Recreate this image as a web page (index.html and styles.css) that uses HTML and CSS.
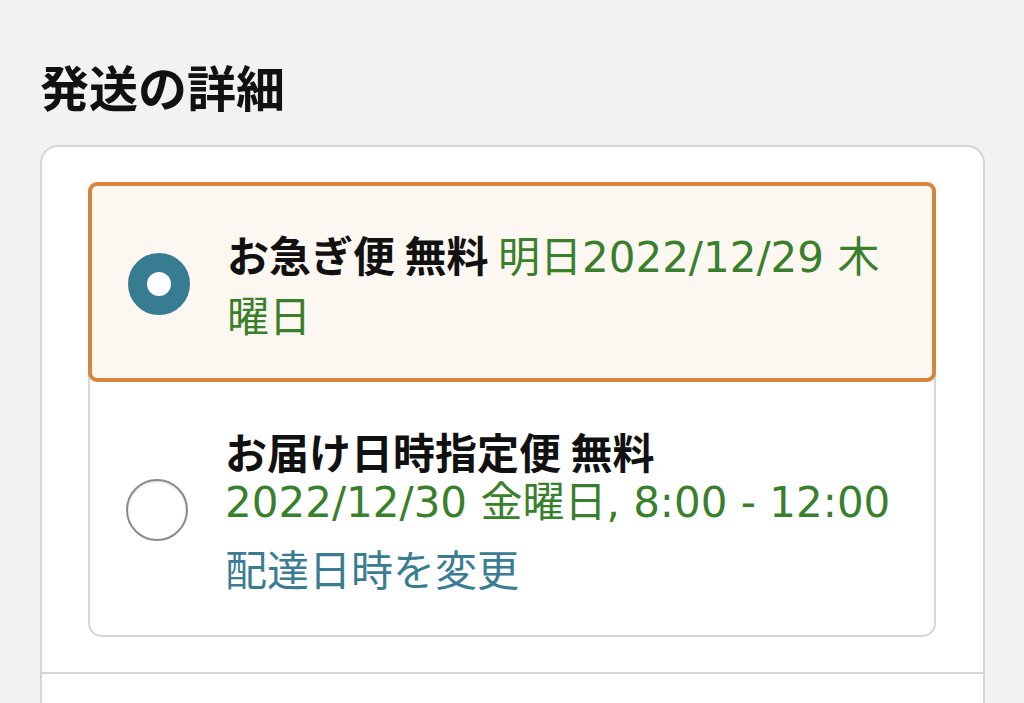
FILE: index.html
```html
<!DOCTYPE html>
<html lang="ja">
<head>
  <meta charset="UTF-8">
  <meta name="viewport" content="width=device-width, initial-scale=1.0">
  <title>発送の詳細</title>
  <link rel="stylesheet" href="styles.css">
</head>
<body>
  <div class="page">
    <h1 class="title">発送の詳細</h1>

    <div class="card">
      <div class="card-section">
        <div class="options">
          <div class="option selected">
            <span class="radio checked"></span>
            <p class="option-text">
              <span class="option-name">お急ぎ便 無料</span>
              <span class="date">明日2022/12/29 木曜日</span>
            </p>
          </div>
          <div class="option">
            <span class="radio"></span>
            <div class="option-text">
              <p class="option-name line">お届け日時指定便 無料</p>
              <p class="date line nowrap">2022/12/30 金曜日, 8:00 - 12:00</p>
              <a class="change-link" href="#">配達日時を変更</a>
            </div>
          </div>
        </div>
      </div>
      <div class="card-section next"></div>
    </div>
  </div>
</body>
</html>
```

FILE: styles.css
```css
body {
  margin: 0;
  background-color: #f2f2f2;
  font-family: "Noto Sans CJK JP", "Noto Sans", sans-serif;
  color: #111;
}
.page {
  padding: 0 39px 0 40px;
}
.title {
  margin: 51px 0 24px;
  font-size: 49px;
  font-weight: 700;
  line-height: 70px;
}
.card {
  background-color: #fff;
  border: 2px solid #d6d6d6;
  border-radius: 18px 18px 0 0;
  border-bottom: none;
}
.card-section {
  padding: 35px 47px 35px 46px;
}
.card-section.next {
  border-top: 2px solid #d6d6d6;
  height: 120px;
}
.options {
  border: 2px solid #d6d6d6;
  border-radius: 14px;
}
.option {
  display: flex;
  align-items: center;
  gap: 37px;
  padding: 43px 34px 41px 36px;
}
.option.selected {
  margin: -2px -2px 0;
  padding: 38px 34px 34px 36px;
  border: 4px solid #d9843b;
  border-radius: 9px;
  background-color: #fcf7f0;
}
.radio {
  flex: none;
  width: 62px;
  height: 62px;
  box-sizing: border-box;
  border-radius: 50%;
  border: 2px solid #8a8a8a;
  background-color: #fff;
  box-shadow: inset 0 1px 2px rgba(0, 0, 0, 0.15);
}
.radio.checked {
  border: 19px solid #387c92;
  box-shadow: none;
}
.option-text {
  flex: 1;
  margin: 0;
  font-size: 42px;
  line-height: 60px;
}
.option-name {
  font-weight: 700;
}
.date {
  font-family: "DejaVu Sans", "Noto Sans CJK JP", sans-serif;
  line-height: 52px;
  color: #3a7f2c;
}
.line {
  margin: 0;
  line-height: 52px;
}
.nowrap {
  white-space: nowrap;
}
.change-link {
  display: block;
  margin-top: 13px;
  line-height: 52px;
  color: #3a7d93;
  text-decoration: none;
}
```
